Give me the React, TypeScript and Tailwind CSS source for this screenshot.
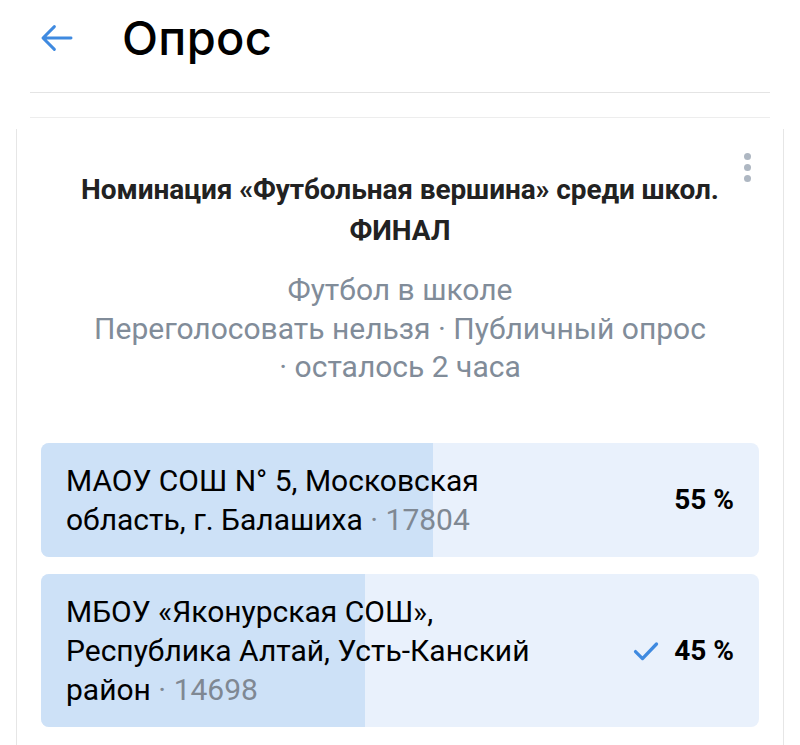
import React from 'react';

type Option = {
  text: string;
  votes: string;
  percent: number;
  checked?: boolean;
};

const options: Option[] = [
  { text: 'МАОУ СОШ N° 5, Московская область, г. Балашиха', votes: '17804', percent: 55 },
  { text: 'МБОУ «Яконурская СОШ», Республика Алтай, Усть-Канский район', votes: '14698', percent: 45, checked: true },
];

const fills = ['w-[392px]', 'w-[324px]'];

export default function App() {
  return (
    <div className="w-[800px] h-[745px] overflow-hidden bg-white font-['Roboto',sans-serif]">
      <header className="flex items-center h-[80px] pl-[36px]">
        <svg width="42" height="42" viewBox="0 0 24 24" fill="none" className="text-[#3f8ae0] -mt-1">
          <path d="M20 12H4.5M10.5 5.5 4 12l6.5 6.5" stroke="currentColor" strokeWidth="1.7" strokeLinecap="round" strokeLinejoin="round" />
        </svg>
        <h1 className="ml-[44px] -mt-1 text-[47px] font-medium text-black tracking-[0.3px] font-['Inter',sans-serif]">Опрос</h1>
      </header>
      <div className="mx-[30px] mt-[12px] h-px bg-[#e4e4e4]" />
      <div className="mx-[30px] mt-[24px] h-px bg-[#ededed]" />
      <section className="mx-[16px] mt-[11px] border-x border-[#e6e6e6] h-[700px] px-[24px]">
        <div className="relative pt-[40px] text-center">
          <div className="absolute right-[8px] top-[24px] flex flex-col gap-[4px]">
            <span className="w-[7px] h-[7px] rounded-full bg-[#aeb7c2]" />
            <span className="w-[7px] h-[7px] rounded-full bg-[#aeb7c2]" />
            <span className="w-[7px] h-[7px] rounded-full bg-[#aeb7c2]" />
          </div>
          <h2 className="text-[28px] leading-[41px] font-bold text-[#222222] px-[16px] tracking-[-0.1px]">
            Номинация «Футбольная вершина» среди школ. ФИНАЛ
          </h2>
          <p className="mt-[19px] text-[30px] leading-[40px] text-[#818c99]">Футбол в школе</p>
          <p className="text-[30px] leading-[38px] text-[#818c99] px-[30px]">
            Переголосовать нельзя ·{'\u00a0'}Публичный опрос ·{'\u00a0'}осталось 2 часа
          </p>
        </div>
        <div className="mt-[57px] flex flex-col gap-[17px]">
          {options.map((o, i) => (
            <div key={i} className="relative overflow-hidden rounded-[8px] bg-[#e9f1fc]">
              <div className={`absolute inset-y-0 left-0 bg-[#cde1f7] ${fills[i]}`} />
              <div className="relative flex items-center pl-[25px] pr-[25px] py-[18px]">
                <p className="w-[500px] text-[30px] leading-[39px] text-black">
                  {o.text} <span className="text-[#7f8893]">·{'\u00a0'}{o.votes}</span>
                </p>
                <div className="ml-auto flex items-center gap-[14px]">
                  {o.checked && (
                    <svg width="28" height="28" viewBox="0 0 24 24" fill="none" className="text-[#3f8ae0]">
                      <path d="M3 12.5 9 18.5 21 6" stroke="currentColor" strokeWidth="2.8" strokeLinecap="round" strokeLinejoin="round" />
                    </svg>
                  )}
                  <span className="text-[28px] font-bold text-black">{o.percent} %</span>
                </div>
              </div>
            </div>
          ))}
        </div>
      </section>
    </div>
  );
}
